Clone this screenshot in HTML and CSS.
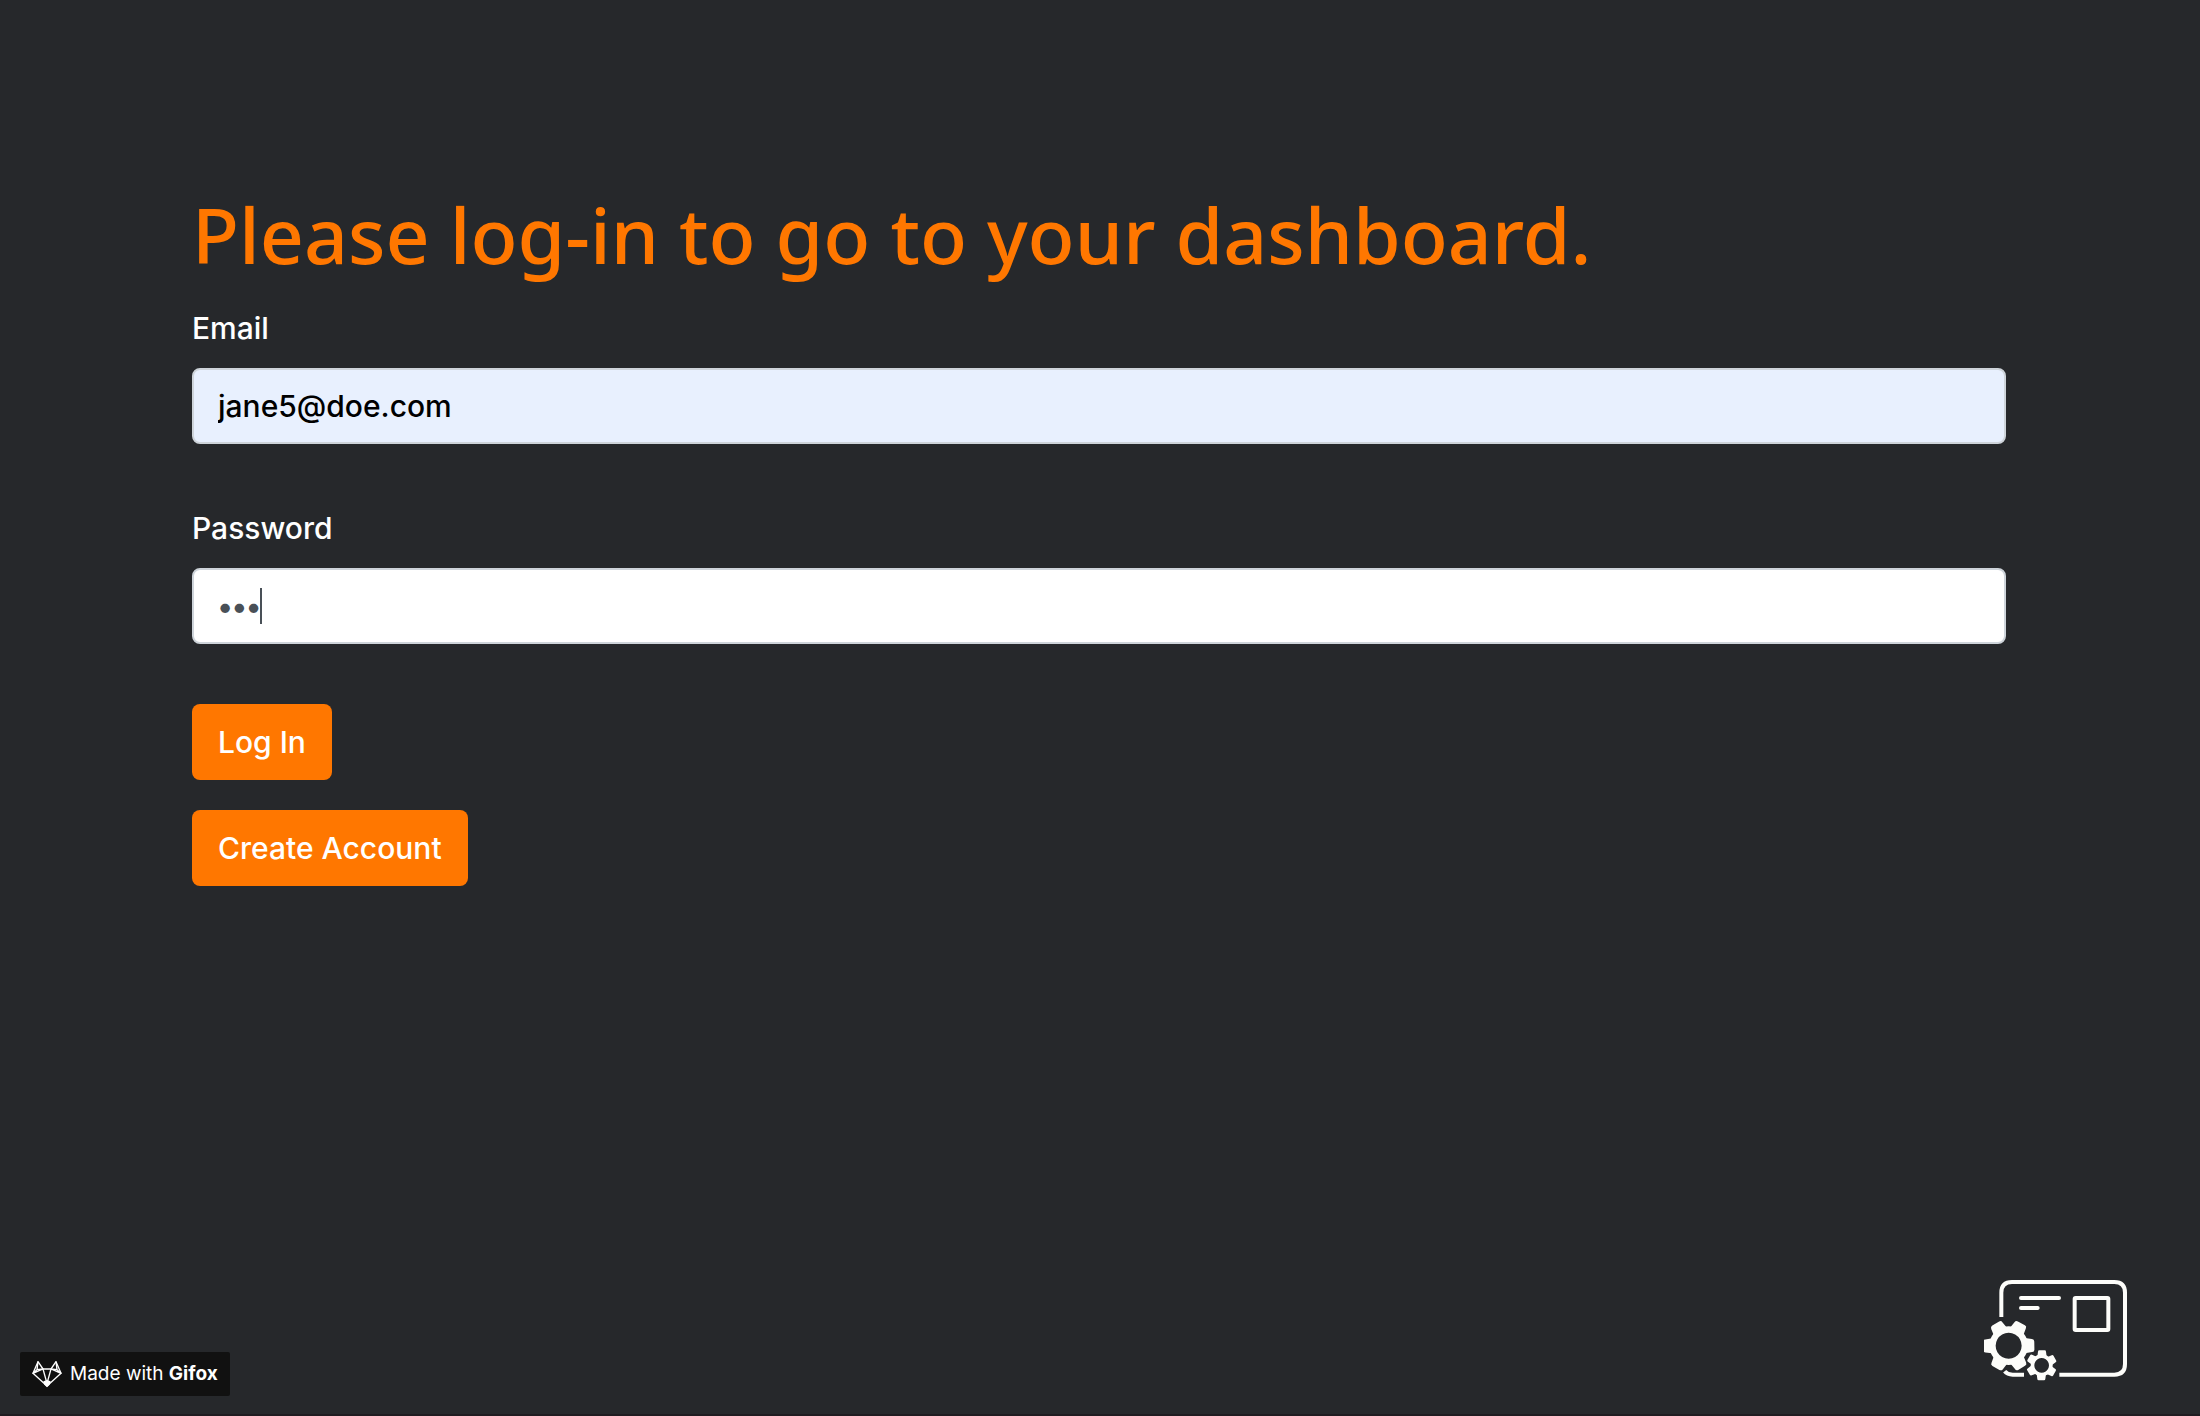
FILE: index.html
```html
<!DOCTYPE html>
<html lang="en">
<head>
<meta charset="utf-8">
<meta name="viewport" content="width=device-width, initial-scale=1">
<title>Log In</title>
<link rel="stylesheet" href="styles.css">
</head>
<body>
<main class="page">
  <h1 class="title">Please log-in to go to your dashboard.</h1>
  <form class="form">
    <div class="field">
      <label class="label" for="email">Email</label>
      <input class="input input-filled" id="email" type="email" value="jane5@doe.com">
    </div>
    <div class="field">
      <label class="label" for="password">Password</label>
      <div class="password">
        <input class="input input-secret" id="password" type="password" value="abc">
        <span class="caret" aria-hidden="true"></span>
      </div>
    </div>
    <div class="actions">
      <button class="button" type="submit">Log In</button>
      <button class="button" type="button">Create Account</button>
    </div>
  </form>
</main>
<footer class="footer">
  <a class="badge" href="#">
    <svg class="fox" viewBox="99 90 90 84" aria-hidden="true">
      <g fill="none" stroke="#fff" stroke-width="4" stroke-linejoin="round">
        <path d="M117 95L102 130L144 168L186 130L171 95L156 117H132Z"/>
        <path d="M117 95L114 119L102 130L132 117L144 160L156 117L186 130L174 119L171 95M114 119L132 117M174 119L156 117"/>
      </g>
      <path fill="#fff" d="M133 154L144 150L155 154L152 164L144 172L136 164Z"/>
    </svg>
    <span>Made with <b>Gifox</b></span>
  </a>
  <svg class="logo" viewBox="72 54 432 309" role="img" aria-label="Dashboard">
    <g fill="none" stroke="#fdfdfa" stroke-width="12">
      <path d="M124 171V98Q124 66 156 66H463Q495 66 495 98V312Q495 344 463 344H298"/>
      <path d="M134 334Q142 344 158 344H192"/>
      <rect x="344" y="114" width="101" height="96" rx="3"/>
      <path stroke-linecap="round" d="M183 114H297M183 144H233"/>
    </g>
    <g fill="#fdfdfa">
      <path fill-rule="evenodd" d="M146 199a58 58 0 1 0 .1 0ZM146 218a39 39 0 1 1-.1 0Z"/>
      <g transform="rotate(-1 146 257)">
        <path id="tooth" d="M190 234L216 238Q223 239 223 246V270Q223 277 216 277L190 281Z"/>
        <use href="#tooth" transform="rotate(60 146 257)"/>
        <use href="#tooth" transform="rotate(120 146 257)"/>
        <use href="#tooth" transform="rotate(180 146 257)"/>
        <use href="#tooth" transform="rotate(240 146 257)"/>
        <use href="#tooth" transform="rotate(300 146 257)"/>
      </g>
      <path fill-rule="evenodd" d="M245 283a33 33 0 1 0 .1 0ZM245 294a22 22 0 1 1-.1 0Z"/>
      <path id="cog" d="M232 290L234 275Q234 271 238 271H254Q258 271 258 275L260 290Z"/>
      <use href="#cog" transform="rotate(60 245 316)"/>
      <use href="#cog" transform="rotate(120 245 316)"/>
      <use href="#cog" transform="rotate(180 245 316)"/>
      <use href="#cog" transform="rotate(240 245 316)"/>
      <use href="#cog" transform="rotate(300 245 316)"/>
    </g>
  </svg>
</footer>
</body>
</html>
```
FILE: styles.css
```css
* { box-sizing: border-box; }

body {
  margin: 0;
  min-height: 100vh;
  display: flex;
  flex-direction: column;
  justify-content: space-between;
  background: #26282b;
  border-bottom: 2px solid #1f1c20;
  color: #fff;
  font-family: Inter, sans-serif;
  font-size: 30px;
  font-weight: 500;
  line-height: 48px;
}

.page { padding: 188px 194px 0 192px; }

.title {
  margin: 0 0 22px;
  color: #ff7700;
  font-family: "Noto Sans", sans-serif;
  font-size: 77px;
  font-weight: 500;
  line-height: 94px;
}

.form, .actions { display: flex; flex-direction: column; }
.form { gap: 60px; }

.field {
  display: flex;
  flex-direction: column;
  gap: 16px;
}

.input {
  display: block;
  width: 100%;
  height: 76px;
  padding: 12px 24px;
  border: 2px solid #ced4da;
  border-radius: 8px;
  background: #fff;
  color: #495057;
  font: inherit;
  outline: none;
}

.input-filled {
  background: #e8f0fe;
  color: #000;
}

.input-secret { font-size: 30px; font-weight: 700; }

.password { position: relative; }

.caret {
  position: absolute;
  left: 68px;
  top: 20px;
  width: 2px;
  height: 36px;
  background: #495057;
}

.actions { align-items: flex-start; gap: 30px; }

.button {
  height: 76px;
  padding: 0 26px;
  border: 0;
  border-radius: 8px;
  background: #ff7700;
  color: #fff;
  font: inherit;
}

.footer {
  display: flex;
  align-items: flex-end;
  justify-content: space-between;
  padding: 0 72px 18px 20px;
}

.badge {
  display: flex;
  align-items: center;
  gap: 8px;
  height: 44px;
  padding: 0 12px;
  border-radius: 2px;
  background: #111;
  color: #fff;
  font-size: 19px;
  font-weight: 400;
  line-height: 24px;
  text-decoration: none;
}

.fox { width: 30px; height: 28px; }

.logo { width: 144px; height: 103px; margin-bottom: 15px; }
```
